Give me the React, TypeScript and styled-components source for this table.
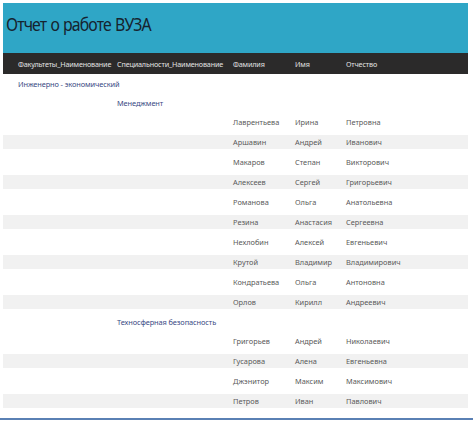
import React from "react";
import styled, { createGlobalStyle } from "styled-components";

const Global = createGlobalStyle`
  html, body { margin: 0; padding: 0; background: #ffffff; }
  body { font-family: "Noto Sans", "Open Sans", sans-serif; }
`;

const Page = styled.div`
  width: 473px;
  height: 421px;
  box-sizing: border-box;
  padding: 3px 5px 0 3px;
  position: relative;
  overflow: hidden;
`;

const Header = styled.header`
  height: 50px;
  background: #2fa6c6;
  display: flex;
  align-items: flex-start;
  padding: 9px 0 0 3px;
  box-sizing: border-box;
`;

const Title = styled.h1`
  margin: 0;
  font-family: "Noto Sans", sans-serif;
  font-weight: 400;
  font-size: 18px;
  letter-spacing: -1px;
  word-spacing: 1px;
  line-height: 24px;
  color: #16232f;
  transform: scaleX(0.88);
  transform-origin: left center;
`;

const cols = "99px 116px 62px 51px 1fr";

const HeadBar = styled.div`
  height: 21px;
  background: #2b2a2a;
  display: grid;
  grid-template-columns: ${cols};
  align-items: center;
  padding-left: 15px;
  box-sizing: border-box;
`;

const HeadCell = styled.span`
  font-size: 7.2px;
  color: #e2e2e2;
  white-space: nowrap;
  letter-spacing: -0.15px;
`;

const Body = styled.div`
  display: flex;
  flex-direction: column;
`;

const Row = styled.div<{ $striped?: boolean; $group?: boolean }>`
  display: grid;
  grid-template-columns: ${cols};
  align-items: center;
  height: ${(p) => (p.$group ? "13px" : "14px")};
  margin: 3px 0;
  padding-left: 15px;
  background: ${(p) => (p.$striped ? "#f1f1f1" : "transparent")};
`;

const GroupCell = styled.span<{ $col: number }>`
  grid-column: ${(p) => p.$col};
  font-size: 7.4px;
  color: #3a4a84;
  white-space: nowrap;
  letter-spacing: -0.1px;
`;

const Cell = styled.span`
  font-size: 7.4px;
  color: #5a5a5a;
  white-space: nowrap;
`;

const BottomLine = styled.div`
  position: absolute;
  left: 0;
  right: 0;
  bottom: 1px;
  height: 2px;
  background: #5a80b4;
`;

type Person = [string, string, string];

const groups: { faculty?: string; spec: string; people: Person[] }[] = [
  {
    faculty: "Инженерно - экономический",
    spec: "Менеджмент",
    people: [
      ["Лаврентьева", "Ирина", "Петровна"],
      ["Аршавин", "Андрей", "Иванович"],
      ["Макаров", "Степан", "Викторович"],
      ["Алексеев", "Сергей", "Григорьевич"],
      ["Романова", "Ольга", "Анатольевна"],
      ["Резина", "Анастасия", "Сергеевна"],
      ["Нехлобин", "Алексей", "Евгеньевич"],
      ["Крутой", "Владимир", "Владимирович"],
      ["Кондратьева", "Ольга", "Антоновна"],
      ["Орлов", "Кирилл", "Андреевич"],
    ],
  },
  {
    spec: "Техносферная безопасность",
    people: [
      ["Григорьев", "Андрей", "Николаевич"],
      ["Гусарова", "Алена", "Евгеньевна"],
      ["Джэнитор", "Максим", "Максимович"],
      ["Петров", "Иван", "Павлович"],
    ],
  },
];

export default function App() {
  return (
    <>
      <Global />
      <Page>
        <Header>
          <Title>Отчет о работе ВУЗА</Title>
        </Header>
        <HeadBar>
          <HeadCell>Факультеты_Наименование</HeadCell>
          <HeadCell>Специальности_Наименование</HeadCell>
          <HeadCell>Фамилия</HeadCell>
          <HeadCell>Имя</HeadCell>
          <HeadCell>Отчество</HeadCell>
        </HeadBar>
        <Body>
          {groups.map((g, gi) => (
            <React.Fragment key={gi}>
              {g.faculty && (
                <Row $group>
                  <GroupCell $col={1}>{g.faculty}</GroupCell>
                </Row>
              )}
              <Row $group>
                <GroupCell $col={2}>{g.spec}</GroupCell>
              </Row>
              {g.people.map((p, i) => (
                <Row key={i} $striped={i % 2 === 1}>
                  <span />
                  <span />
                  <Cell>{p[0]}</Cell>
                  <Cell>{p[1]}</Cell>
                  <Cell>{p[2]}</Cell>
                </Row>
              ))}
            </React.Fragment>
          ))}
        </Body>
        <BottomLine />
      </Page>
    </>
  );
}
